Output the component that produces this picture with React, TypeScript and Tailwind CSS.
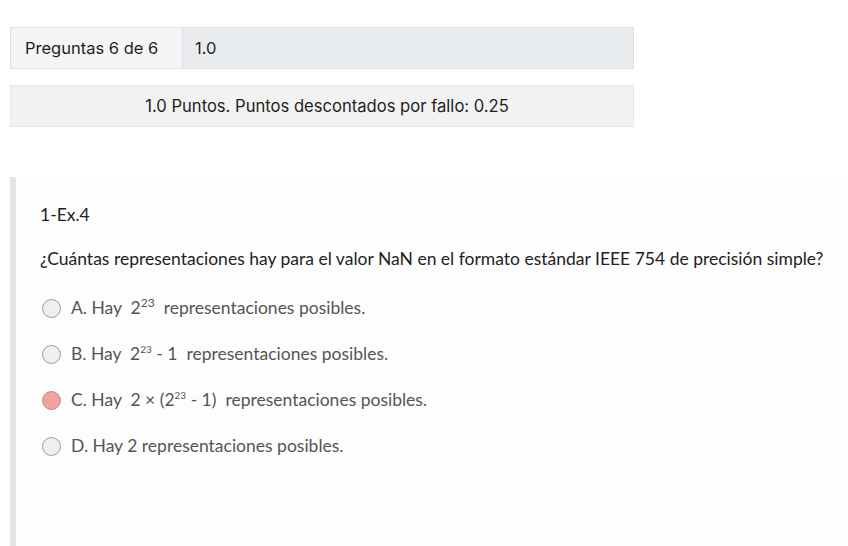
import React from "react";

type Option = {
  letter: string;
  body: React.ReactNode;
  picked?: boolean;
};

const Sup = ({ n, small }: { n: string; small?: boolean }) => (
  <sup className={small ? "text-[10px] relative -top-[7px] align-baseline" : "text-[12px] relative -top-[7px] align-baseline"}>{n}</sup>
);

const options: Option[] = [
  {
    letter: "A.",
    body: (
      <>
        Hay&nbsp; 2<Sup n="23" />&nbsp; representaciones posibles.
      </>
    ),
  },
  {
    letter: "B.",
    body: (
      <>
        Hay&nbsp; 2<Sup n="23" small /> - 1&nbsp; representaciones posibles.
      </>
    ),
  },
  {
    letter: "C.",
    body: (
      <>
        Hay&nbsp; 2 × (2<Sup n="23" small /> - 1)&nbsp; representaciones posibles.
      </>
    ),
    picked: true,
  },
  { letter: "D.", body: <>Hay 2 representaciones posibles.</> },
];

function Radio({ picked }: { picked?: boolean }) {
  return (
    <span
      className={
        picked
          ? "w-[19px] h-[19px] rounded-full border border-[#c98585] bg-[#f0a3a3] shrink-0"
          : "w-[19px] h-[19px] rounded-full border border-[#9d9d9d] bg-[#efefef] shrink-0"
      }
    />
  );
}

export default function App() {
  return (
    <div className="min-h-[546px] bg-white pt-[27px] pl-[10px] pr-[214px] font-['Inter',sans-serif]">
      <div className="flex h-[42px] border border-[#dcdfe3] text-[16.5px] text-[#1e1e1e]">
        <div className="w-[172px] bg-[#f5f5f5] border-r border-[#dcdfe3] flex items-center pl-[14px]">
          Preguntas 6 de 6
        </div>
        <div className="flex-1 bg-[#e9ecef] flex items-center pl-[12px]">1.0</div>
      </div>

      <div className="mt-[16px] h-[42px] border border-[#e6e6e6] bg-[#f2f2f2] flex items-center justify-center pl-[10px] text-[16.6px] text-[#1e1e1e]">
        1.0 Puntos. Puntos descontados por fallo: 0.25
      </div>

      <div className="mt-[50px] -mr-[214px] border-l-[6px] border-[#e4e5e7] bg-[#fdfdfd] h-[370px] pl-[24px] pt-[25px] font-['Lato',sans-serif] text-[17.5px]">
        <div className="text-[#222]">1-Ex.4</div>
        <div className="mt-[18px] text-[#222] whitespace-nowrap">
          ¿Cuántas representaciones hay para el valor NaN en el formato estándar IEEE 754 de precisión simple?
        </div>
        <div className="mt-[23px] flex flex-col gap-[21px] text-[#555]">
          {options.map((o) => (
            <label key={o.letter} className="flex items-center gap-[10px] pl-[2px] h-[25px]">
              <Radio picked={o.picked} />
              <span>
                {o.letter} {o.body}
              </span>
            </label>
          ))}
        </div>
      </div>
    </div>
  );
}
